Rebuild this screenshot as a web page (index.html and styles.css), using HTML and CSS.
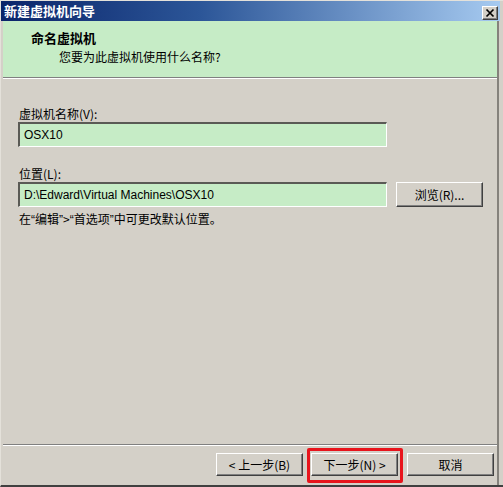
FILE: index.html
```html
<!DOCTYPE html>
<html lang="zh-CN">
<head>
<meta charset="utf-8">
<title>新建虚拟机向导</title>
<link rel="stylesheet" href="styles.css">
</head>
<body>
<div class="window">
  <div class="titlebar">
    <span class="title">新建虚拟机向导</span>
    <span class="close-btn">
      <svg width="14" height="12" viewBox="0 0 14 12"><path d="M3.5 2.5 L10.5 9.5 M10.5 2.5 L3.5 9.5" stroke="#000" stroke-width="1.7" fill="none"/></svg>
    </span>
  </div>
  <div class="panel">
    <div class="header">
      <div class="heading">命名虚拟机</div>
      <div class="subheading">您要为此虚拟机使用什么名称?</div>
    </div>
    <div class="sep"></div>
    <div class="content">
      <div class="label">虚拟机名称(V):</div>
      <div class="row">
        <div class="field">OSX10</div>
      </div>
      <div class="label label-second">位置(L):</div>
      <div class="row">
        <div class="field">D:\Edward\Virtual Machines\OSX10</div>
        <div class="btn btn-browse">浏览(R)...</div>
      </div>
      <div class="hint">在<span class="q">“</span>编辑<span class="q">”</span>&gt;<span class="q">“</span>首选项<span class="q">”</span>中可更改默认位置。</div>
    </div>
    <div class="sep"></div>
    <div class="footer">
      <div class="btn btn-nav">&lt; 上一步(B)</div>
      <div class="btn btn-nav btn-next">下一步(N) &gt;</div>
      <div class="btn btn-nav btn-cancel">取消</div>
    </div>
  </div>
  <div class="highlight"></div>
</div>
</body>
</html>
```
FILE: styles.css
```css
body {
  margin: 0;
  background: #d4d0c8;
}

.window {
  position: relative;
  width: 503px;
  height: 487px;
  box-sizing: border-box;
  background: #d4d0c8;
  border-top: 1px solid #e4e1da;
  border-left: 1px solid #e4e1da;
  border-bottom: 2px solid #404040;
  display: flex;
  flex-direction: column;
  font-family: "Noto Sans CJK SC", sans-serif;
  font-size: 12px;
  color: #000;
}

.titlebar {
  height: 20px;
  flex: none;
  margin-right: 3px;
  padding: 0 2px 0 3px;
  background: linear-gradient(to right, #0a246a 0%, #2c5698 40%, #a6caf0 100%);
  display: flex;
  justify-content: space-between;
  align-items: center;
}

.title {
  color: #fff;
  font-weight: bold;
  font-size: 13px;
  line-height: 16px;
}

.close-btn {
  align-self: flex-start;
  margin-top: 5px;
  width: 16px;
  height: 14px;
  box-sizing: border-box;
  background: #d4d0c8;
  border-top: 1px solid #fff;
  border-left: 1px solid #fff;
  border-right: 1px solid #404040;
  border-bottom: 1px solid #404040;
  box-shadow: inset -1px -1px 0 #808080;
  display: flex;
  align-items: center;
  justify-content: center;
}

.close-btn svg {
  display: block;
}

.panel {
  flex: 1;
  margin-left: 2px;
  margin-right: 4px;
  border-right: 2px solid #85827c;
  display: flex;
  flex-direction: column;
}

.header {
  height: 56px;
  flex: none;
  box-sizing: border-box;
  background: #c6ecc6;
  padding: 9px 0 0 28px;
}

.heading {
  font-size: 13px;
  font-weight: bold;
  line-height: 16px;
}

.subheading {
  margin-top: 3px;
  margin-left: 28px;
  line-height: 15px;
}

.sep {
  height: 1px;
  flex: none;
  background: #808080;
  border-bottom: 1px solid #fff;
}

.content {
  flex: 1;
  padding: 28px 0 0 15px;
}

.label {
  line-height: 14px;
  margin-left: 1px;
  margin-bottom: 1px;
}

.label-second {
  margin-top: 20px;
}

.row {
  display: flex;
  align-items: center;
  gap: 9px;
}

.field {
  width: 369px;
  height: 25px;
  box-sizing: border-box;
  background: #c6ecc6;
  border-top: 2px solid #5a5a55;
  border-left: 2px solid #5a5a55;
  border-right: 1px solid #fff;
  border-bottom: 1px solid #fff;
  padding: 0 0 0 4px;
  font-family: "Liberation Sans", sans-serif;
  font-size: 12px;
  line-height: 22px;
}

.btn {
  box-sizing: border-box;
  background: #d4d0c8;
  border-top: 1px solid #fff;
  border-left: 1px solid #fff;
  border-right: 1px solid #404040;
  border-bottom: 1px solid #404040;
  box-shadow: inset -1px -1px 0 #808080;
  display: flex;
  align-items: center;
  justify-content: center;
  line-height: 14px;
}

.btn-browse {
  width: 87px;
  height: 25px;
}

.hint {
  margin-top: 5px;
  margin-left: 1px;
  line-height: 14px;
}

.q {
  font-family: "Liberation Sans", sans-serif;
}

.footer {
  height: 39px;
  flex: none;
  box-sizing: border-box;
  padding: 7px 3px 0 0;
  display: flex;
  justify-content: flex-end;
  align-items: flex-start;
}

.btn-nav {
  width: 87px;
  height: 23px;
}

.btn-next {
  margin-left: 8px;
}

.btn-cancel {
  margin-left: 9px;
}

.highlight {
  position: absolute;
  left: 306px;
  top: 447px;
  width: 96px;
  height: 35px;
  box-sizing: border-box;
  border: 3px solid #e8141c;
  border-radius: 2px;
}
```
